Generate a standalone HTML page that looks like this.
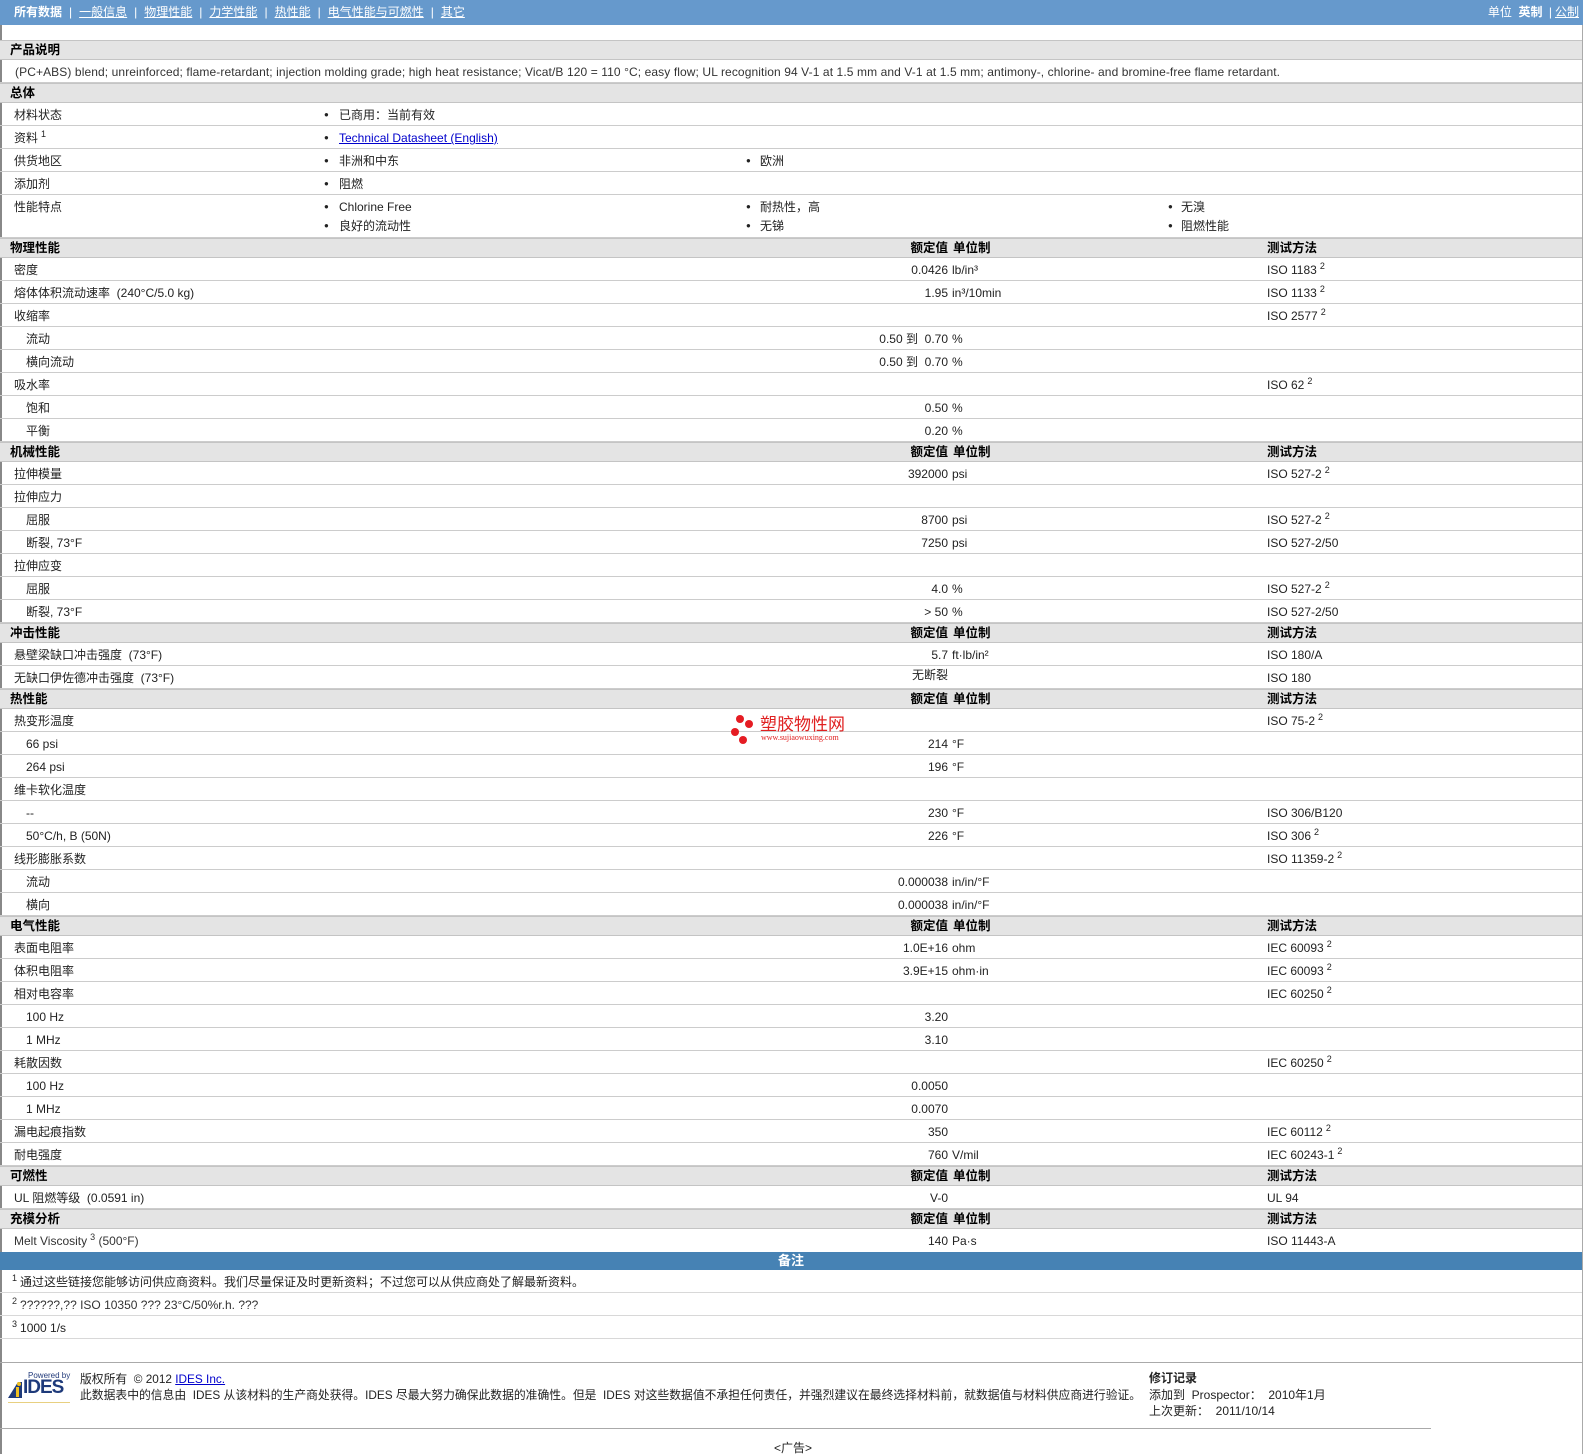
<!DOCTYPE html>
<html><head><meta charset="utf-8"><style>
*{margin:0;padding:0;box-sizing:border-box}
body{width:1586px;height:1454px;background:#fff;font-family:"Liberation Sans","Noto Sans CJK SC",sans-serif;font-size:12px;color:#222;position:relative;overflow:hidden}
#pg{position:absolute;left:0;top:0;width:1583px;height:1454px;border-left:2px solid #888;border-right:1px solid #aaa}
.top{position:absolute;left:0;top:0;width:1583px;height:25px;background:#6699cc;color:#fff;font-size:12px;line-height:24px}
.top .n{position:absolute;left:14px;top:0;white-space:nowrap}
.top a{color:#fff;text-decoration:underline}
.top .sp{margin:0 7px}
.top .rt{position:absolute;right:4px;top:0}
.r{position:absolute;left:0;width:1582px;height:23px;border-bottom:1px solid #ccc}
.h{position:absolute;left:0;width:1582px;height:20px;background:#e4e4e4;border-top:1px solid #c4c4c4;border-bottom:1px solid #c4c4c4;font-weight:bold;font-size:12.5px;color:#000}
.r span{position:absolute;top:1px;line-height:22px;white-space:nowrap}
.h span{position:absolute;top:0;line-height:18px;white-space:nowrap}
.l{left:14px}.s{left:26px}
.v{right:634px;text-align:right}
.u{left:952px}
.m{left:1267px}
.hv{right:634px}.hu{left:953px}.hm{left:1267px}
.r span.b1,.r span.b2,.r span.b3{font-size:8px}
.b1{left:324px}.t1{left:339px}.b2{left:746px}.t2{left:760px}.b3{left:1168px}.t3{left:1181px}
sup{font-size:9px;vertical-align:5px;margin-left:3px;line-height:0}
a{color:#00c}
</style></head><body><div id="pg"></div>
<div class="top"><div class="n"><b>所有数据</b><span class="sp">|</span><a>一般信息</a><span class="sp">|</span><a>物理性能</a><span class="sp">|</span><a>力学性能</a><span class="sp">|</span><a>热性能</a><span class="sp">|</span><a>电气性能与可燃性</a><span class="sp">|</span><a>其它</a></div><div class="rt">单位 <b>&nbsp;英制</b> <span style="margin:0 3px">|</span><a>公制</a></div></div>

<div class="h" style="top:40px"><span style="left:10px">产品说明</span></div>
<div class="r" style="top:60px"><span style="left:15px;color:#333;letter-spacing:0.1px">(PC+ABS) blend; unreinforced; flame-retardant; injection molding grade; high heat resistance; Vicat/B 120 = 110 °C; easy flow; UL recognition 94 V-1 at 1.5 mm and V-1 at 1.5 mm; antimony-, chlorine- and bromine-free flame retardant.</span></div>
<div class="h" style="top:83px"><span style="left:10px">总体</span></div>
<div class="r" style="top:103px"><span class="l">材料状态</span><span class="b1">●</span><span class="t1">已商用：当前有效</span></div>
<div class="r" style="top:126px"><span class="l">资料<sup>1</sup></span><span class="b1">●</span><span class="t1"><a style="text-decoration:underline">Technical Datasheet (English)</a></span></div>
<div class="r" style="top:149px"><span class="l">供货地区</span><span class="b1">●</span><span class="t1">非洲和中东</span><span class="b2">●</span><span class="t2">欧洲</span></div>
<div class="r" style="top:172px"><span class="l">添加剂</span><span class="b1">●</span><span class="t1">阻燃</span></div>
<div class="r" style="top:195px;height:43px"><span class="l">性能特点</span><span class="b1">●</span><span class="t1">Chlorine Free</span><span class="b2">●</span><span class="t2">耐热性，高</span><span class="b3">●</span><span class="t3">无溴</span><span class="b1" style="top:20px">●</span><span class="t1" style="top:20px">良好的流动性</span><span class="b2" style="top:20px">●</span><span class="t2" style="top:20px">无锑</span><span class="b3" style="top:20px">●</span><span class="t3" style="top:20px">阻燃性能</span></div>

<div class="h" style="top:238px"><span style="left:10px">物理性能</span><span class="hv">额定值</span><span class="hu">单位制</span><span class="hm">测试方法</span></div>
<div class="r" style="top:258px"><span class="l">密度</span><span class="v">0.0426</span><span class="u">lb/in³</span><span class="m">ISO 1183<sup>2</sup></span></div>
<div class="r" style="top:281px"><span class="l">熔体体积流动速率 &nbsp;(240°C/5.0 kg)</span><span class="v">1.95</span><span class="u">in³/10min</span><span class="m">ISO 1133<sup>2</sup></span></div>
<div class="r" style="top:304px"><span class="l">收缩率</span><span class="m">ISO 2577<sup>2</sup></span></div>
<div class="r" style="top:327px"><span class="s">流动</span><span class="v">0.50 到 &nbsp;0.70</span><span class="u">%</span></div>
<div class="r" style="top:350px"><span class="s">横向流动</span><span class="v">0.50 到 &nbsp;0.70</span><span class="u">%</span></div>
<div class="r" style="top:373px"><span class="l">吸水率</span><span class="m">ISO 62<sup>2</sup></span></div>
<div class="r" style="top:396px"><span class="s">饱和</span><span class="v">0.50</span><span class="u">%</span></div>
<div class="r" style="top:419px"><span class="s">平衡</span><span class="v">0.20</span><span class="u">%</span></div>

<div class="h" style="top:442px"><span style="left:10px">机械性能</span><span class="hv">额定值</span><span class="hu">单位制</span><span class="hm">测试方法</span></div>
<div class="r" style="top:462px"><span class="l">拉伸模量</span><span class="v">392000</span><span class="u">psi</span><span class="m">ISO 527-2<sup>2</sup></span></div>
<div class="r" style="top:485px"><span class="l">拉伸应力</span></div>
<div class="r" style="top:508px"><span class="s">屈服</span><span class="v">8700</span><span class="u">psi</span><span class="m">ISO 527-2<sup>2</sup></span></div>
<div class="r" style="top:531px"><span class="s">断裂, 73°F</span><span class="v">7250</span><span class="u">psi</span><span class="m">ISO 527-2/50</span></div>
<div class="r" style="top:554px"><span class="l">拉伸应变</span></div>
<div class="r" style="top:577px"><span class="s">屈服</span><span class="v">4.0</span><span class="u">%</span><span class="m">ISO 527-2<sup>2</sup></span></div>
<div class="r" style="top:600px"><span class="s">断裂, 73°F</span><span class="v">&gt; 50</span><span class="u">%</span><span class="m">ISO 527-2/50</span></div>

<div class="h" style="top:623px"><span style="left:10px">冲击性能</span><span class="hv">额定值</span><span class="hu">单位制</span><span class="hm">测试方法</span></div>
<div class="r" style="top:643px"><span class="l">悬壁梁缺口冲击强度 &nbsp;(73°F)</span><span class="v">5.7</span><span class="u">ft·lb/in²</span><span class="m">ISO 180/A</span></div>
<div class="r" style="top:666px"><span class="l">无缺口伊佐德冲击强度 &nbsp;(73°F)</span><span class="v" style="top:-2px">无断裂</span><span class="m">ISO 180</span></div>

<div class="h" style="top:689px"><span style="left:10px">热性能</span><span class="hv">额定值</span><span class="hu">单位制</span><span class="hm">测试方法</span></div>
<div class="r" style="top:709px"><span class="l">热变形温度</span><span class="m">ISO 75-2<sup>2</sup></span></div>
<div class="r" style="top:732px"><span class="s">66 psi</span><span class="v">214</span><span class="u">°F</span></div>
<div class="r" style="top:755px"><span class="s">264 psi</span><span class="v">196</span><span class="u">°F</span></div>
<div class="r" style="top:778px"><span class="l">维卡软化温度</span></div>
<div class="r" style="top:801px"><span class="s">--</span><span class="v">230</span><span class="u">°F</span><span class="m">ISO 306/B120</span></div>
<div class="r" style="top:824px"><span class="s">50°C/h, B (50N)</span><span class="v">226</span><span class="u">°F</span><span class="m">ISO 306<sup>2</sup></span></div>
<div class="r" style="top:847px"><span class="l">线形膨胀系数</span><span class="m">ISO 11359-2<sup>2</sup></span></div>
<div class="r" style="top:870px"><span class="s">流动</span><span class="v">0.000038</span><span class="u">in/in/°F</span></div>
<div class="r" style="top:893px"><span class="s">横向</span><span class="v">0.000038</span><span class="u">in/in/°F</span></div>

<div style="position:absolute;left:731px;top:711px;width:140px;height:34px">
<div style="position:absolute;left:5px;top:4px;width:8px;height:8px;border-radius:50%;background:#e51c23"></div>
<div style="position:absolute;left:14px;top:9px;width:8px;height:8px;border-radius:50%;background:#e51c23"></div>
<div style="position:absolute;left:0;top:17px;width:8px;height:8px;border-radius:50%;background:#e51c23"></div>
<div style="position:absolute;left:8px;top:25px;width:8px;height:8px;border-radius:50%;background:#e51c23"></div>
<span style="position:absolute;left:29px;top:2px;color:#e02020;font-size:17px;font-family:'Noto Sans CJK SC',sans-serif;line-height:20px">塑胶物性网</span>
<span style="position:absolute;left:30px;top:22px;color:#e02020;font-size:8px;font-family:'Liberation Serif',serif">www.sujiaowuxing.com</span>
</div>

<div class="h" style="top:916px"><span style="left:10px">电气性能</span><span class="hv">额定值</span><span class="hu">单位制</span><span class="hm">测试方法</span></div>
<div class="r" style="top:936px"><span class="l">表面电阻率</span><span class="v">1.0E+16</span><span class="u">ohm</span><span class="m">IEC 60093<sup>2</sup></span></div>
<div class="r" style="top:959px"><span class="l">体积电阻率</span><span class="v">3.9E+15</span><span class="u">ohm·in</span><span class="m">IEC 60093<sup>2</sup></span></div>
<div class="r" style="top:982px"><span class="l">相对电容率</span><span class="m">IEC 60250<sup>2</sup></span></div>
<div class="r" style="top:1005px"><span class="s">100 Hz</span><span class="v">3.20</span></div>
<div class="r" style="top:1028px"><span class="s">1 MHz</span><span class="v">3.10</span></div>
<div class="r" style="top:1051px"><span class="l">耗散因数</span><span class="m">IEC 60250<sup>2</sup></span></div>
<div class="r" style="top:1074px"><span class="s">100 Hz</span><span class="v">0.0050</span></div>
<div class="r" style="top:1097px"><span class="s">1 MHz</span><span class="v">0.0070</span></div>
<div class="r" style="top:1120px"><span class="l">漏电起痕指数</span><span class="v">350</span><span class="m">IEC 60112<sup>2</sup></span></div>
<div class="r" style="top:1143px"><span class="l">耐电强度</span><span class="v">760</span><span class="u">V/mil</span><span class="m">IEC 60243-1<sup>2</sup></span></div>

<div class="h" style="top:1166px"><span style="left:10px">可燃性</span><span class="hv">额定值</span><span class="hu">单位制</span><span class="hm">测试方法</span></div>
<div class="r" style="top:1186px"><span class="l">UL 阻燃等级 &nbsp;(0.0591 in)</span><span class="v">V-0</span><span class="m">UL 94</span></div>
<div class="h" style="top:1209px"><span style="left:10px">充模分析</span><span class="hv">额定值</span><span class="hu">单位制</span><span class="hm">测试方法</span></div>
<div class="r" style="top:1229px;border-bottom:none"><span class="l" style="color:#333">Melt Viscosity<sup>3</sup> (500°F)</span><span class="v">140</span><span class="u">Pa·s</span><span class="m">ISO 11443-A</span></div>

<div style="position:absolute;left:0;top:1252px;width:1582px;height:18px;background:#4682b4;color:#fff;font-weight:bold;font-size:13px;text-align:center;line-height:18px">备注</div>
<div class="r" style="top:1270px;border-bottom-color:#d8d8d8"><span class="l" style="left:12px"><sup style="margin:0 3px 0 0">1</sup>通过这些链接您能够访问供应商资料。我们尽量保证及时更新资料；不过您可以从供应商处了解最新资料。</span></div>
<div class="r" style="top:1293px;border-bottom-color:#d8d8d8"><span class="l" style="left:12px;color:#333"><sup style="margin:0 3px 0 0">2</sup>??????,?? ISO 10350 ??? 23°C/50%r.h. ???</span></div>
<div class="r" style="top:1316px;border-bottom-color:#d8d8d8"><span class="l" style="left:12px"><sup style="margin:0 3px 0 0">3</sup>1000 1/s</span></div>
<div style="position:absolute;left:0;top:1362px;width:1582px;border-top:1px solid #aaa"></div>

<div style="position:absolute;left:8px;top:1371px;width:62px;height:32px">
<span style="position:absolute;left:20px;top:0;font-size:8px;color:#223a7a;white-space:nowrap">Powered by</span>
<svg style="position:absolute;left:0;top:8px" width="16" height="20"><polygon points="0,19 10,3 14,3 14,19" fill="#1e3a7a"/><rect x="8" y="8" width="3" height="10" fill="#f0c020"/><circle cx="11" cy="5" r="2" fill="#f0c020"/></svg>
<span style="position:absolute;left:15px;top:6px;font-size:19px;font-weight:bold;color:#1e3a7a;letter-spacing:-1px">IDES</span>
<div style="position:absolute;left:0;top:31px;width:62px;height:1px;background:#e8d080"></div>
</div>
<div style="position:absolute;left:80px;top:1371px;font-size:11.8px;line-height:16px;white-space:nowrap;letter-spacing:0px">版权所有 &nbsp;© 2012 <a style="text-decoration:underline">IDES Inc.</a><br>此数据表中的信息由 &nbsp;IDES 从该材料的生产商处获得。IDES 尽最大努力确保此数据的准确性。但是 &nbsp;IDES 对这些数据值不承担任何责任，并强烈建议在最终选择材料前，就数据值与材料供应商进行验证。</div>
<div style="position:absolute;left:1147px;top:1370px;font-size:12px;line-height:16.5px;white-space:nowrap;background:#fff;padding-left:2px"><b>修订记录</b><br>添加到 &nbsp;Prospector： &nbsp;2010年1月<br>上次更新： &nbsp;2011/10/14</div>
<div style="position:absolute;left:0;top:1428px;width:1431px;border-top:1px solid #aaa"></div>
<div style="position:absolute;left:774px;top:1439px;font-size:12px">&lt;广告&gt;</div>
</body></html>
